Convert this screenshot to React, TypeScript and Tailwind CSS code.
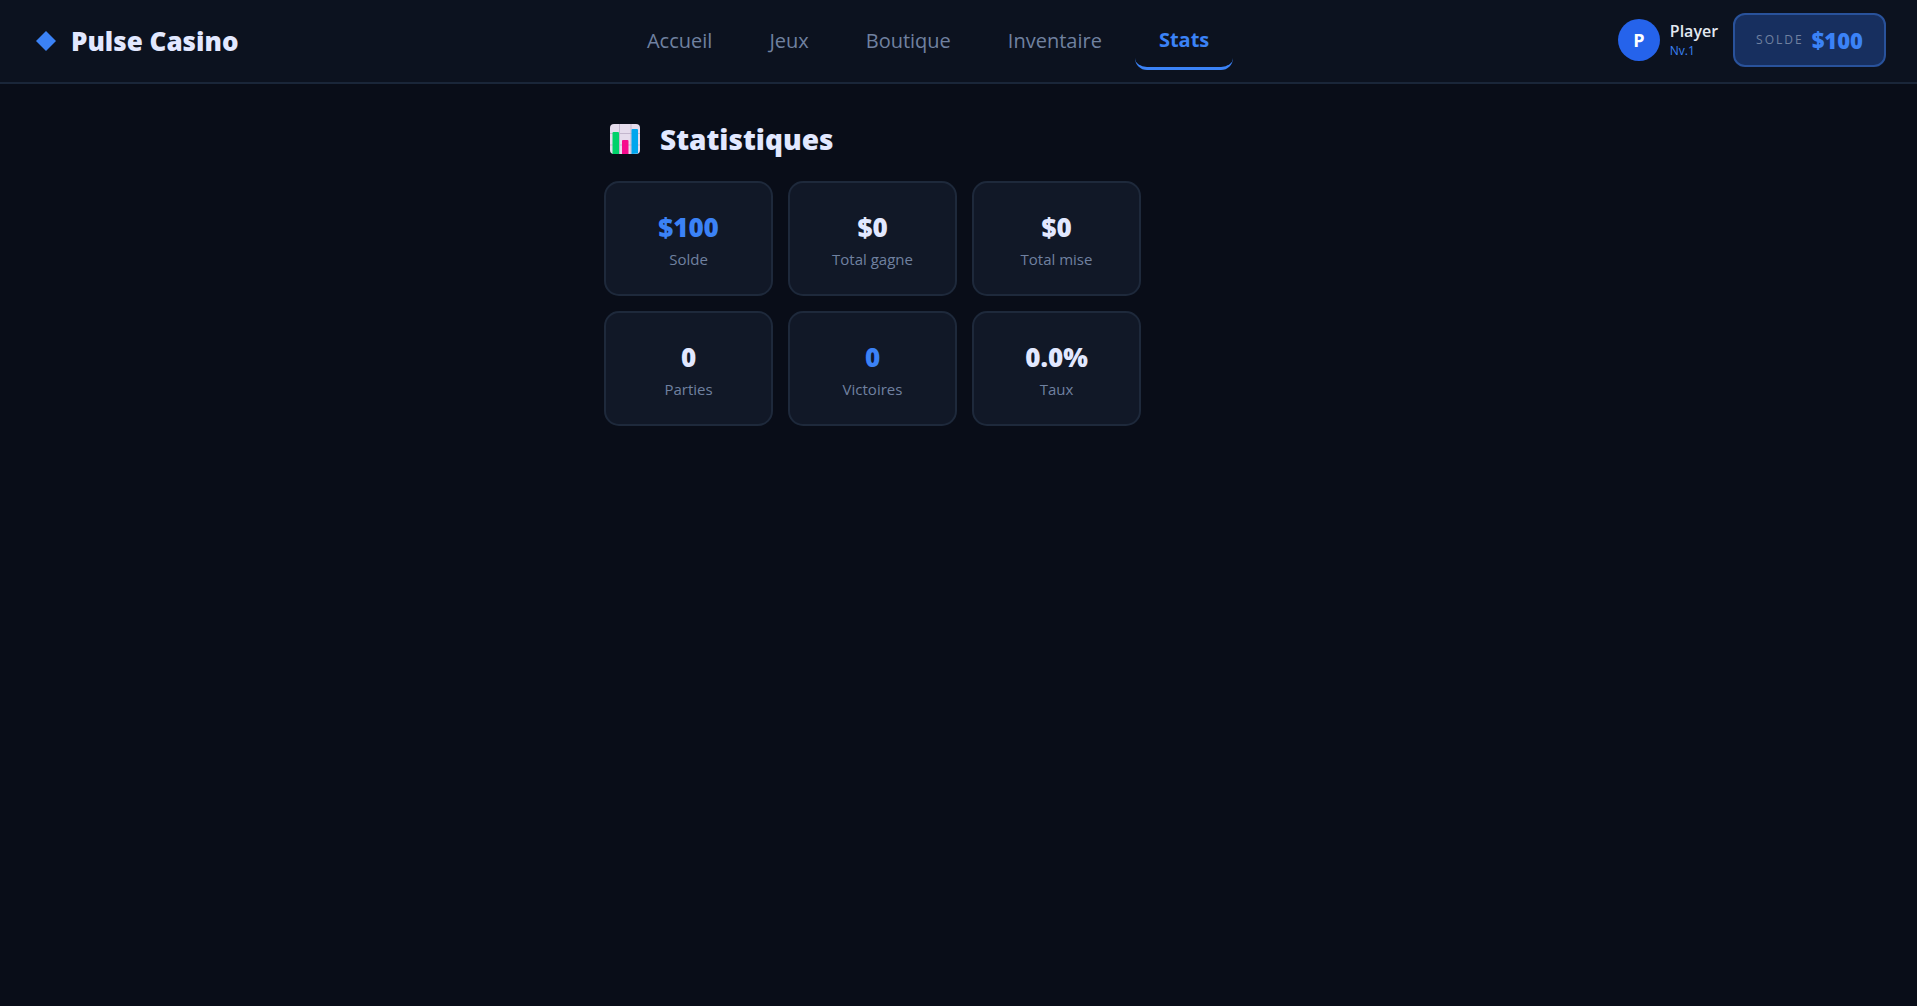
import React, { useState } from 'react';

interface Stat {
    label: string;
    value: string;
    accent?: boolean;
}

const navLinks = ['Accueil', 'Jeux', 'Boutique', 'Inventaire', 'Stats'];

const stats: Stat[] = [
    { label: 'Solde', value: '$100', accent: true },
    { label: 'Total gagne', value: '$0' },
    { label: 'Total mise', value: '$0' },
    { label: 'Parties', value: '0' },
    { label: 'Victoires', value: '0', accent: true },
    { label: 'Taux', value: '0.0%' },
];

const ChartIcon: React.FC = () => (
    <svg viewBox="0 0 30 30" className="size-[30px]" aria-hidden="true">
        <rect width="30" height="30" rx="4" fill="#e5dcec" />
        <path d="M9.5 0v30M21 0v30M0 9.5h30M0 21h30" stroke="#c3b7cd" strokeWidth="1" />
        <path d="M2.5 30V9a1 1 0 0 1 1-1H8a1 1 0 0 1 1 1v21z" fill="#00d26a" />
        <path d="M12 30V17a1 1 0 0 1 1-1h4.500a1 1 0 0 1 1 1v13z" fill="#f70a8d" />
        <path d="M21.500 30V6a1 1 0 0 1 1-1H27a1 1 0 0 1 1 1v23.500z" fill="#00a6ed" />
    </svg>
);

const Header: React.FC = () => {
    const [current, setCurrent] = useState('Stats');

    return (
        <header className="flex h-[84px] items-center justify-between border-b-2 border-[#1a2639] bg-[#0c121f] pr-[31px] pb-[2px] pl-9">
            <a href="#" className="flex items-center gap-[15px] pt-[2px]">
                <svg viewBox="0 0 20 20" className="size-5" aria-hidden="true">
                    <path d="M10 0 20 10 10 20 0 10z" fill="#3b82f6" />
                </svg>
                <span className="text-[26px] leading-8 font-extrabold text-[#e2e8ff]">Pulse Casino</span>
            </a>

            <nav className="flex gap-[9px]">
                {navLinks.map(link => (
                    <button
                        key={link}
                        type="button"
                        onClick={() => setCurrent(link)}
                        className={
                            link === current
                                ? 'h-[60px] rounded-xl border-b-3 border-[#3b82f6] px-6 pt-[2px] text-xl font-bold text-[#3b82f6]'
                                : 'h-[60px] rounded-xl px-6 pt-[2px] text-xl text-[#7081a0]'
                        }
                    >
                        {link}
                    </button>
                ))}
            </nav>

            <div className="flex items-center gap-[15px]">
                <div className="flex items-center gap-[10px]">
                    <div className="flex size-[42px] items-center justify-center rounded-full bg-[#2563eb] text-lg font-bold text-white">P</div>
                    <div className="pt-[2px]">
                        <p className="text-base leading-5 font-semibold text-[#e2e8f0]">Player</p>
                        <p className="text-xs leading-5 font-medium text-[#3b82f6]">Nv.1</p>
                    </div>
                </div>
                <div className="flex h-[54px] items-center gap-2 rounded-xl border-2 border-[#29529b] bg-[#172f5f] px-[21px]">
                    <span className="text-xs tracking-[2px] text-[#7081a0]">SOLDE</span>
                    <span className="text-[22px] leading-7 font-extrabold text-[#3b82f6]">$100</span>
                </div>
            </div>
        </header>
    );
};

// Value sits above its label, so the dt/dd pair is reversed
const StatCard: React.FC<{ stat: Stat }> = ({ stat }) => (
    <div className="flex h-[115px] w-[169px] flex-col-reverse items-center justify-center rounded-[15px] border-2 border-[#1e293b] bg-[#111827] pt-1">
        <dt className="text-[15px] leading-7 text-[#7081a0]">{stat.label}</dt>
        <dd className={`text-[26px] leading-9 font-extrabold ${stat.accent ? 'text-[#3b82f6]' : 'text-[#e2e8ff]'}`}>{stat.value}</dd>
    </div>
);

const App: React.FC = () => {
    return (
        <div className="min-h-screen bg-[#090d18] font-['Open_Sans','Noto_Sans',sans-serif]">
            <Header />
            <main className="mx-auto max-w-[709px] pt-[35px]">
                <h1 className="flex items-center gap-5 pl-[6px] text-[28px] leading-10 font-extrabold text-[#e2e8ff]">
                    <ChartIcon />
                    Statistiques
                </h1>
                <dl className="mt-[22px] flex flex-wrap gap-[15px]">
                    {stats.map(stat => (
                        <StatCard key={stat.label} stat={stat} />
                    ))}
                </dl>
            </main>
        </div>
    );
};

export default App;
